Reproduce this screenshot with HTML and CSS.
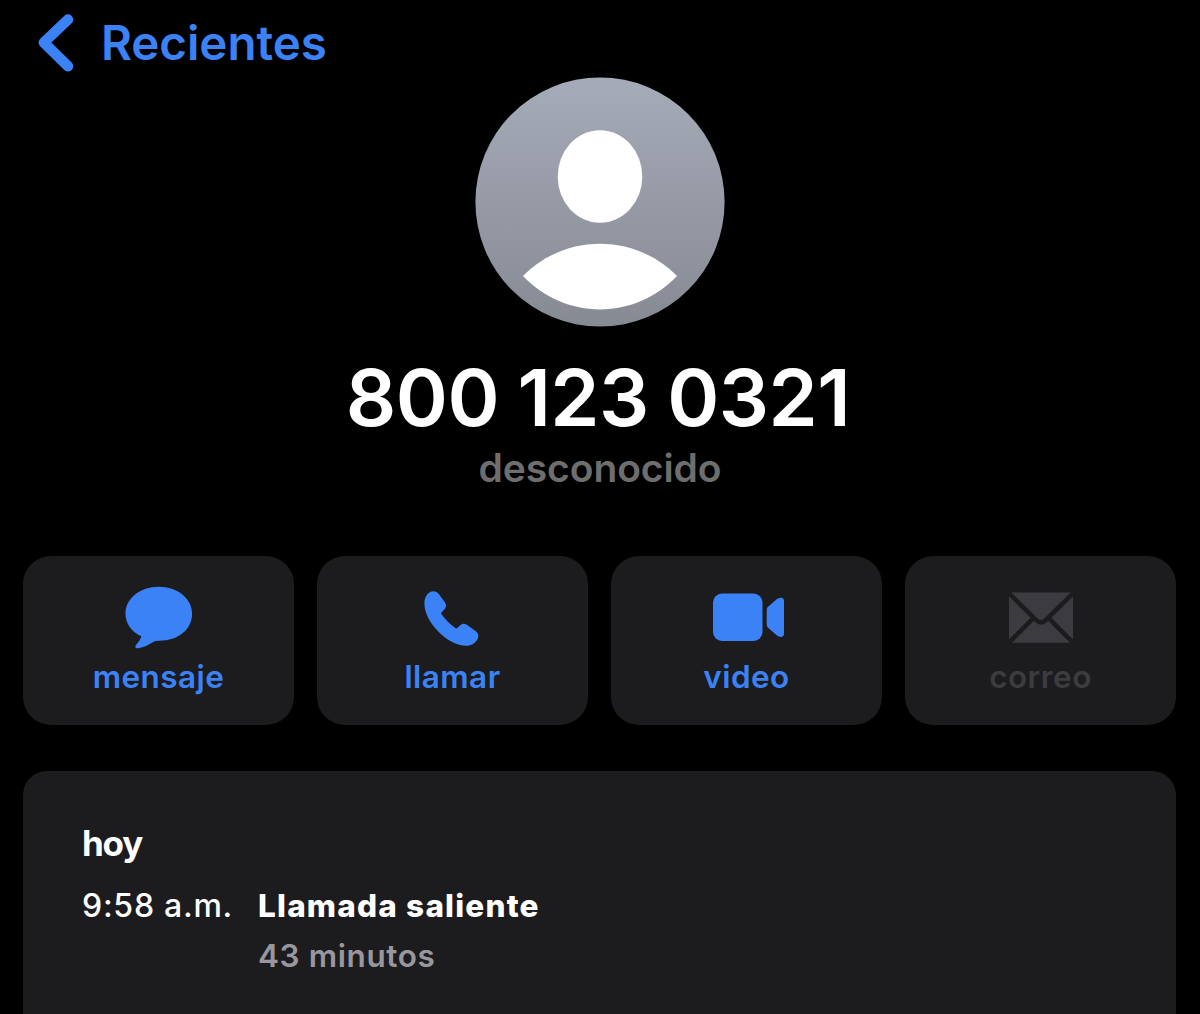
FILE: index.html
```html
<!DOCTYPE html>
<html lang="es">
<head>
<meta charset="utf-8">
<title>Recientes</title>
<link rel="stylesheet" href="styles.css">
</head>
<body>
<nav class="nav">
  <svg class="nav-chevron" width="38" height="58" viewBox="0 0 38 58"><path d="M31 5.5 6.800 28.500 31 52.300" fill="none" stroke="currentColor" stroke-width="10.500" stroke-linecap="round" stroke-linejoin="round"/></svg>
  <span class="nav-title">Recientes</span>
</nav>
<header class="contact">
  <svg class="avatar" width="250" height="250" viewBox="0 0 250 250">
    <defs><linearGradient id="avatar-fill" x1="0" y1="0" x2="0" y2="1"><stop offset="0" stop-color="#a6abb9"/><stop offset="1" stop-color="#868a93"/></linearGradient></defs>
    <circle cx="125" cy="125" r="124.6" fill="url(#avatar-fill)"/>
    <ellipse cx="125" cy="99.5" rx="42.3" ry="46.3" fill="#fff"/>
    <path d="M48 199C90 156 160 156 202 199C160 243.500 90 243.500 48 199Z" fill="#fff"/>
  </svg>
  <h1 class="number">800 123 0321</h1>
  <p class="caption">desconocido</p>
</header>
<main class="content">
  <section class="actions">
    <div class="action">
      <svg width="80" height="72" viewBox="0 0 80 72" fill="currentColor"><path d="M39.800 4.700C58.500 4.700 73.100 16.500 73.100 31.700C73.100 47.500 59 59 39.500 58.700Q37 58.500 35 59.600C31 62 25 66 19 66.200C16.500 66.300 15.500 64.800 17 63C19.500 60 21.500 57.500 22.300 54.300C12.500 49.500 6.500 41.500 6.500 31.700C6.500 16.500 21 4.700 39.800 4.700Z"/></svg>
      <span class="label label-message">mensaje</span>
    </div>
    <div class="action">
      <svg width="80" height="72" viewBox="0 0 80 72" fill="currentColor"><path d="M17.500 9.800C21 8.300 24 9.500 26 12.300L31.800 20.300C33.600 22.700 33.500 25 31.500 27.200L28.700 30.200C28 31 28 31.500 28.500 32.300C32.200 37.500 37.200 42.400 42.300 46C43.200 46.600 43.700 46.600 44.500 45.800L47.500 43C49.600 41.300 52 41.400 54.200 43L62.500 49C65.600 51.300 66 54.200 64.500 57.200C62 61.600 58.200 63.700 53.400 63.700C34.500 63.700 11.400 40 11.400 21.500C11.400 16.500 13.500 12 17.500 9.800Z"/></svg>
      <span class="label label-call">llamar</span>
    </div>
    <div class="action">
      <svg width="80" height="72" viewBox="0 0 80 72" fill="currentColor"><rect x="6" y="11.500" width="49.500" height="47.500" rx="9"/><path d="M59.700 27.800Q59.700 26 61.100 24.800L69.700 17.300Q71.900 15.600 74.200 15.800Q77 16.100 77 19V51.700Q77 54.500 74.200 54.900Q71.900 55.100 69.700 53.300L61.100 45.700Q59.700 44.500 59.700 42.500Z"/></svg>
      <span class="label label-video">video</span>
    </div>
    <div class="action action-disabled">
      <svg width="80" height="72" viewBox="0 0 80 72"><rect x="8" y="10.500" width="64" height="50.300" rx="3" fill="currentColor"/><path d="M7.200 10.500 34.700 37.700Q40 43 45.300 37.700L72.800 10.500M7.200 61.300 32.400 36.200M72.800 61.300 47.600 36.200" fill="none" stroke="#1c1c1e" stroke-width="4.500"/></svg>
      <span class="label label-mail">correo</span>
    </div>
  </section>
  <section class="history">
    <h2 class="day">hoy</h2>
    <div class="call">
      <span class="time">9:58 a.m.</span>
      <div>
        <div class="kind">Llamada saliente</div>
        <div class="duration">43 minutos</div>
      </div>
    </div>
  </section>
</main>
</body>
</html>
```
FILE: styles.css
```css
* { box-sizing: border-box; }
body {
  margin: 0;
  height: 1014px;
  overflow: hidden;
  display: flex;
  flex-direction: column;
  background: #000;
  color: #fff;
  font-family: Inter, "Liberation Sans", sans-serif;
  font-size: 32px;
  line-height: 40px;
}
h1, h2, p { margin: 0; }
svg { display: block; flex: none; }

.nav {
  display: flex;
  padding: 14px 0 0 37px;
  color: #3c82f7;
}
.nav-title {
  margin-left: 26px;
  font-size: 47.5px;
  line-height: 58px;
  font-weight: 600;
  letter-spacing: -0.05px;
}

.contact {
  display: flex;
  flex-direction: column;
  align-items: center;
  margin-top: 5px;
}
.number {
  margin-top: 30px;
  padding-right: 4px;
  font-size: 79px;
  line-height: 80px;
  font-weight: 600;
  letter-spacing: -0.5px;
  word-spacing: -1px;
  white-space: nowrap;
}
.caption {
  margin-top: 7px;
  color: #6e6e6e;
  font-size: 39px;
  line-height: 48px;
  font-weight: 600;
  letter-spacing: -0.1px;
}

.content {
  flex: 1;
  display: flex;
  flex-direction: column;
  padding: 64px 24px 0 23px;
}
.actions {
  display: grid;
  grid-template-columns: repeat(4, 1fr);
  gap: 23px;
}
.action {
  display: flex;
  flex-direction: column;
  align-items: center;
  height: 169px;
  padding-top: 26px;
  border-radius: 28px;
  background: #1c1c1e;
  color: #3c82f7;
}
.action-disabled { color: #3c3b40; }
.label { margin-top: 3px; font-size: 31.5px; font-weight: 600; letter-spacing: 0.45px; }

.history {
  flex: 1;
  margin-top: 46px;
  padding: 50px 58px 0 59px;
  border-radius: 24px 24px 0 0;
  background: #1c1c1e;
}
.day { font-size: 35px; line-height: 44px; font-weight: 700; letter-spacing: -1.2px; }
.call {
  display: grid;
  grid-template-columns: 176px 1fr;
  margin-top: 21px;
}
.time { font-weight: 500; letter-spacing: 0.75px; }
.kind { font-weight: 800; font-size: 31.5px; letter-spacing: 1.2px; }
.duration { margin-top: 10px; color: #98979e; font-size: 31.5px; font-weight: 600; letter-spacing: 0.6px; }
```
